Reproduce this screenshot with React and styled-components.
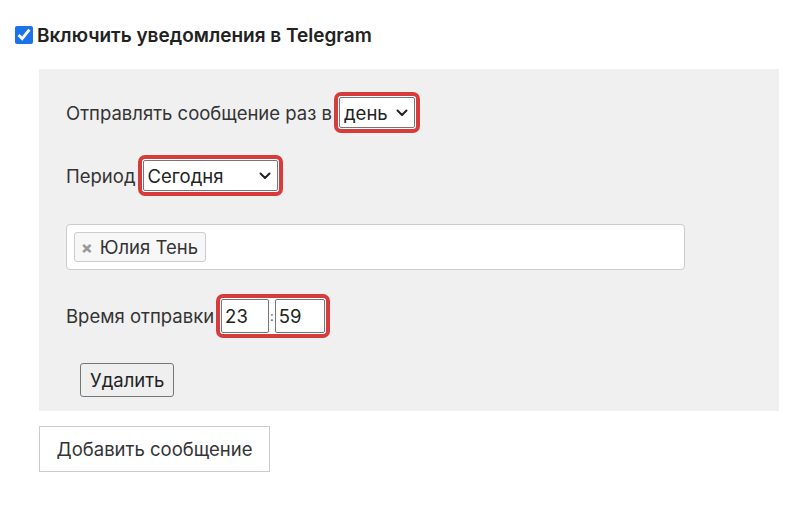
import React from "react";
import styled, { createGlobalStyle } from "styled-components";

const GlobalStyle = createGlobalStyle`
  body {
    margin: 0;
    background: #ffffff;
    font-family: Inter, "Noto Sans", sans-serif;
    color: #222222;
  }
`;

const Page = styled.div`
  padding: 24px 24px 40px 15px;
  width: 803px;
  box-sizing: border-box;
`;

const EnableLabel = styled.label`
  display: flex;
  align-items: center;
  gap: 4px;
  font-size: 19px;
  font-weight: 600;
  color: #222;
  height: 22px;
`;

const Check = styled.input`
  width: 18px;
  height: 18px;
  margin: 0;
  accent-color: #1a73e8;
`;

const Panel = styled.div`
  margin: 23px 0 0 24px;
  width: 740px;
  background: #f0f0f0;
  padding: 23px 27px 14px 27px;
  box-sizing: border-box;
  display: flex;
  flex-direction: column;
  align-items: flex-start;
`;

const Row = styled.div`
  display: flex;
  align-items: center;
  font-size: 18.5px;
  color: #333;
  margin-bottom: ${({ $gap }) => $gap}px;
`;

const Highlight = styled.span`
  display: inline-flex;
  align-items: center;
  border: 4px solid #d73c3c;
  border-radius: 7px;
  padding: 1px;
  background: #fff;
  margin-left: 2px;
`;

const Select = styled.div`
  display: flex;
  align-items: center;
  justify-content: space-between;
  box-sizing: border-box;
  width: ${({ $w }) => $w}px;
  height: 31px;
  border: 1px solid #767676;
  border-radius: 2px;
  background: #fff;
  padding: 0 6px 0 4px;
  font-size: 18.5px;
  color: #222;
`;

const TimeBox = styled.div`
  box-sizing: border-box;
  width: ${({ $w }) => $w}px;
  height: 34px;
  border: 1px solid #767676;
  border-radius: 2px;
  background: #fff;
  padding: 0 3px;
  display: flex;
  align-items: center;
  font-size: 18.5px;
  color: #222;
`;

const Colon = styled.span`
  font-size: 13px;
  color: #555;
  padding: 0 1px;
`;

const TagField = styled.div`
  width: 619px;
  height: 46px;
  box-sizing: border-box;
  background: #fff;
  border: 1px solid #cccccc;
  border-radius: 4px;
  padding: 7px 7px;
  display: flex;
  align-items: center;
  margin-bottom: 24px;
`;

const Tag = styled.span`
  display: inline-flex;
  align-items: center;
  height: 30px;
  box-sizing: border-box;
  border: 1px solid #cccccc;
  border-radius: 3px;
  background: #f7f7f7;
  padding: 0 7px 0 6px;
  font-size: 18.5px;
  color: #333;
  gap: 7px;
`;

const TagRemove = styled.span`
  font-size: 17px;
  font-weight: 800;
  color: #999;
  line-height: 1;
`;

const DeleteButton = styled.button`
  margin-left: 14px;
  font-family: inherit;
  font-size: 18.5px;
  color: #222;
  background: #efefef;
  border: 1px solid #767676;
  border-radius: 3px;
  height: 34px;
  padding: 0 9px;
`;

const AddButton = styled.button`
  margin: 15px 0 0 24px;
  font-family: inherit;
  font-size: 18.5px;
  color: #333;
  background: #fff;
  border: 1px solid #cccccc;
  height: 46px;
  width: 231px;
  padding: 0;
`;

const Chevron = () => (
  <svg width="12" height="8" viewBox="0 0 12 8" fill="none">
    <path d="M1.5 1.5 L6 6 L10.5 1.5" stroke="#222" strokeWidth="2" strokeLinecap="round" strokeLinejoin="round" />
  </svg>
);

export default function App() {
  return (
    <>
      <GlobalStyle />
      <Page>
        <EnableLabel>
          <Check type="checkbox" defaultChecked />
          Включить уведомления в Telegram
        </EnableLabel>
        <Panel>
          <Row $gap={22}>
            Отправлять сообщение раз в
            <Highlight>
              <Select $w={76}>
                день <Chevron />
              </Select>
            </Highlight>
          </Row>
          <Row $gap={28}>
            Период
            <Highlight>
              <Select $w={135}>
                Сегодня <Chevron />
              </Select>
            </Highlight>
          </Row>
          <TagField>
            <Tag>
              <TagRemove>×</TagRemove>
              Юлия Тень
            </Tag>
          </TagField>
          <Row $gap={25}>
            Время отправки
            <Highlight>
              <TimeBox $w={48}>23</TimeBox>
              <Colon>:</Colon>
              <TimeBox $w={50}>59</TimeBox>
            </Highlight>
          </Row>
          <DeleteButton>Удалить</DeleteButton>
        </Panel>
        <AddButton>Добавить сообщение</AddButton>
      </Page>
    </>
  );
}
